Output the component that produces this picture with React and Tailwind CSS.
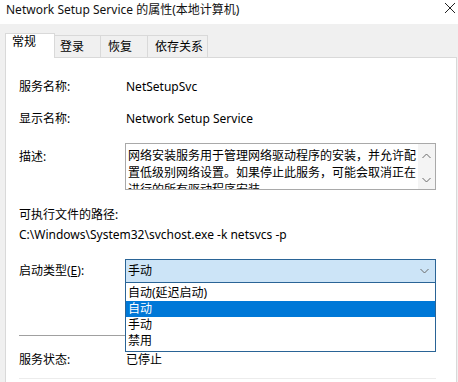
import React from 'react';

const tabs = [
    { label: '登录', cls: 'w-[46px] pl-[5px]' },
    { label: '恢复', cls: 'w-[47px] pl-[7px]' },
    { label: '依存关系', cls: 'w-[60px] pl-[7px]' },
];
const options = ['自动(延迟启动)', '自动', '手动', '禁用'];

const Chevron = ({ up }) => (
    <svg width="9" height="6" viewBox="0 0 9 6" className="block">
        <path d={up ? 'M0.5 5L4.5 1L8.5 5' : 'M0.5 1L4.5 5L8.5 1'} fill="none" stroke="#6b6b6b" strokeWidth="1" />
    </svg>
);

const App = () => {
    return (
        <div className="w-[458px] h-[382px] overflow-hidden bg-[#f0f0f0] text-[12px] text-black font-['Segoe_UI','Noto_Sans','Noto_Sans_CJK_SC',sans-serif]">
            {/* Title bar */}
            <div className="h-[24px] bg-white flex items-center justify-between pl-[6px] pr-[2px]">
                <span className="text-[12px] leading-[20px] -mt-[4px] text-[#111]">Network Setup Service 的属性(本地计算机)</span>
                <svg width="12" height="12" viewBox="0 0 12 12" className="-mt-[8px]">
                    <path d="M1 1L11 11M11 1L1 11" stroke="#222" strokeWidth="1" />
                </svg>
            </div>

            {/* Tabs */}
            <div className="h-[34px] flex items-end pl-[5px] relative z-10 -mb-px">
                <div className="h-[25px] w-[50px] bg-white border border-[#d9d9d9] border-b-0 pl-[6px] leading-[14px] pt-[1px]">常规</div>
                {tabs.map(t => (
                    <div key={t.label} className={`h-[22px] mb-px flex items-center bg-[#f0f0f0] border border-[#d9d9d9] border-l-0 border-b-0 ${t.cls}`}>{t.label}</div>
                ))}
            </div>

            {/* Panel */}
            <div className="ml-[5px] w-[452px] h-[330px] bg-white border border-[#d9d9d9] pl-[13px] flex flex-col">
                <div className="mt-[19px] h-[20px] flex items-center">
                    <span className="w-[107px]">服务名称:</span>
                    <span>NetSetupSvc</span>
                </div>
                <div className="mt-[12px] h-[20px] flex items-center">
                    <span className="w-[107px]">显示名称:</span>
                    <span>Network Setup Service</span>
                </div>
                <div className="mt-[14px] flex">
                    <span className="w-[106px] mt-[4px] leading-[20px]">描述:</span>
                    <div className="w-[311px] h-[47px] border border-[#a9a9a9] flex overflow-hidden">
                        <div className="flex-1 pl-[2px] pt-[3px] leading-[17px] text-[12px]">
                            网络安装服务用于管理网络驱动程序的安装，并允许配置低级别网络设置。如果停止此服务，可能会取消正在进行的所有驱动程序安装。
                        </div>
                        <div className="w-[17px] bg-[#f4f4f4] flex flex-col items-center justify-between pt-[9px] pb-[6px]">
                            <Chevron up />
                            <Chevron />
                        </div>
                    </div>
                </div>
                <div className="mt-[15px] h-[20px] flex items-center">可执行文件的路径:</div>
                <div className="h-[20px] flex items-center">C:\Windows\System32\svchost.exe -k netsvcs -p</div>
                <div className="mt-[14px] flex items-center">
                    <span className="w-[106px]">启动类型(<span className="underline">E</span>):</span>
                    <div className="relative w-[311px]">
                        <div className="h-[24px] border border-[#2a6496] bg-[#cce4f7] flex items-center justify-between pl-[2px] pr-[6px]">
                            <span>手动</span>
                            <Chevron />
                        </div>
                        <div className="absolute left-0 top-full w-full z-20 bg-white border border-[#2a6496] border-t-0 pt-[2px] pb-[2px]">
                            {options.map(o => (
                                <div key={o} className={`h-[16px] leading-[16px] pl-[2px] ${o === '自动' ? 'bg-[#0078d7] text-white' : ''}`}>{o}</div>
                            ))}
                        </div>
                    </div>
                </div>
                <div className="mt-[52px] h-px w-[417px] bg-[#a0a0a0]"></div>
                <div className="mt-[14px] h-[20px] flex items-center">
                    <span className="w-[107px]">服务状态:</span>
                    <span>已停止</span>
                </div>
                <div className="mt-[8px] h-px w-[417px] bg-[#ececec]"></div>
            </div>
        </div>
    );
};

export default App;
